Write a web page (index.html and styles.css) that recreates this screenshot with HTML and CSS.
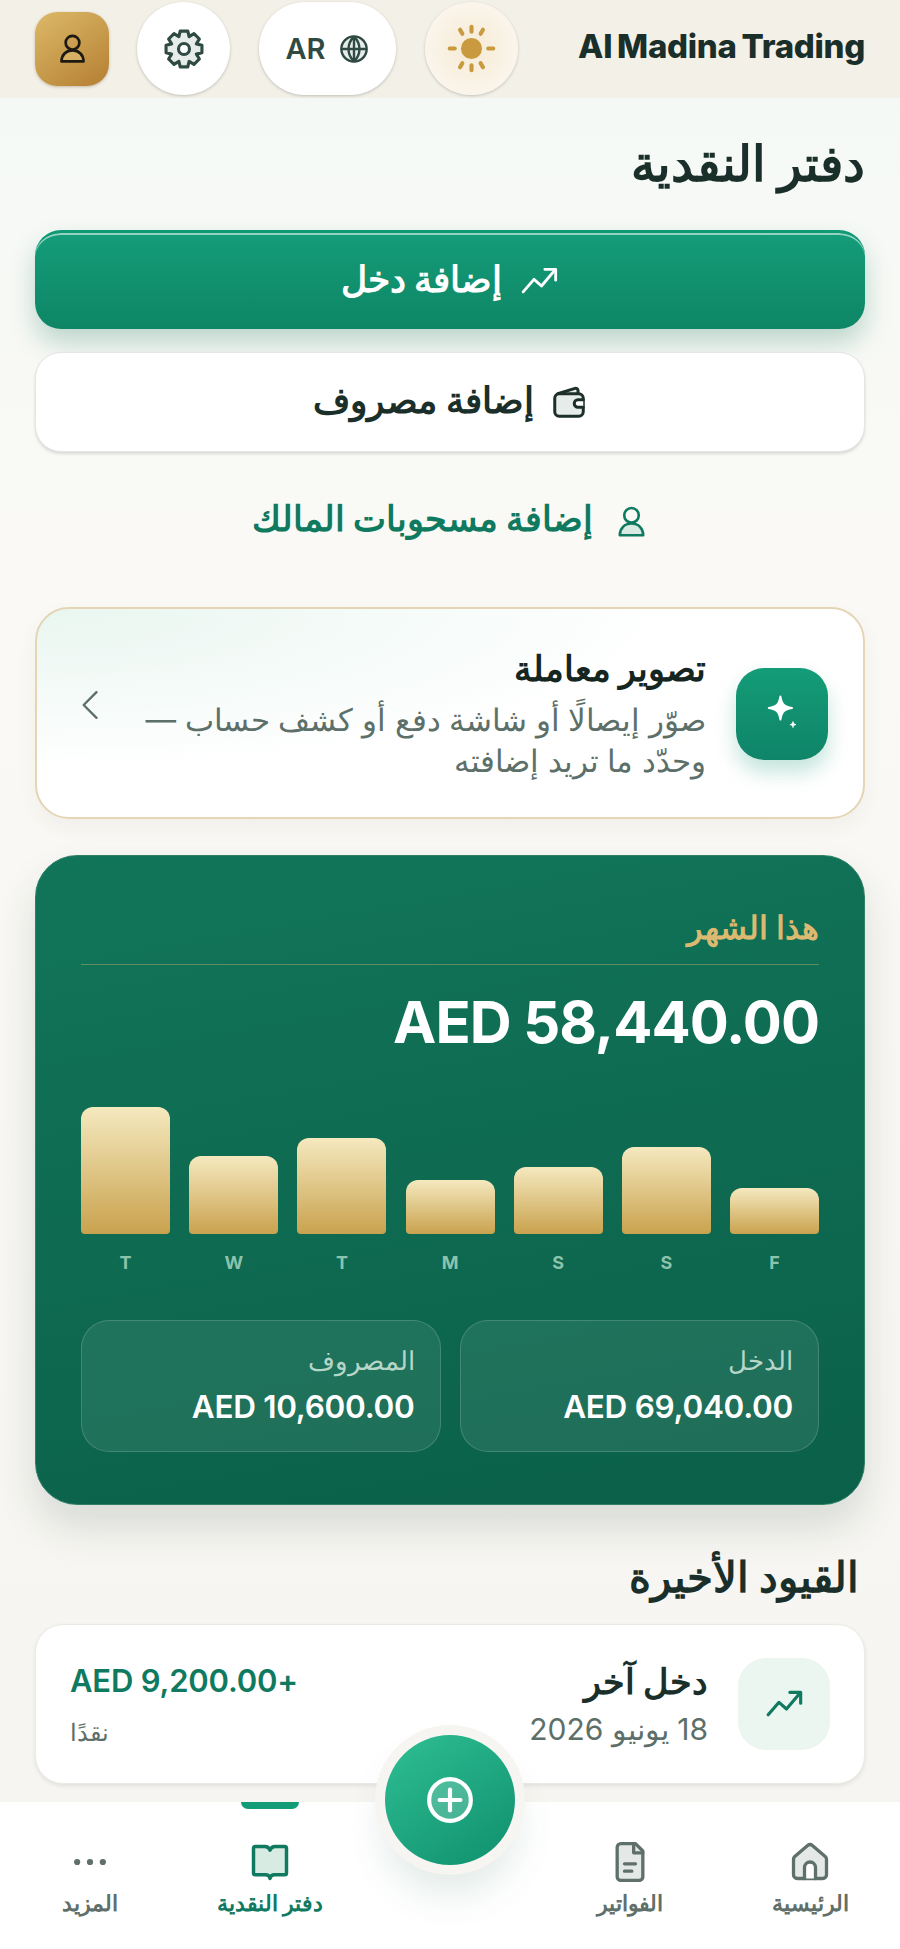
FILE: index.html
```html
<!DOCTYPE html>
<html lang="ar" dir="rtl">
<head>
<meta charset="utf-8">
<title>دفتر النقدية</title>
<link rel="stylesheet" href="styles.css">
</head>
<body>
<div class="app">
  <header class="topbar">
    <div class="brand">Al Madina Trading</div>
    <div class="top-actions">
      <button class="round sun" aria-label="theme">
        <svg width="55" height="55" viewBox="0 0 24 24" fill="none" stroke="#c99a3f" stroke-width="1.800" stroke-linecap="round"><circle cx="12" cy="12" r="4.600" fill="#c99a3f" stroke="none"/><path d="M12 2.500v2.200M12 19.300v2.200M2.500 12h2.200M19.300 12h2.200M7 3.800l1 1.800M16 18.400l1 1.800M7 20.200l1-1.800M16 5.600l1-1.800"/></svg>
      </button>
      <button class="round lang">
        <svg width="32" height="32" viewBox="0 0 24 24" fill="#e6ecea" stroke="#2f4a43" stroke-width="1.800"><circle cx="12" cy="12" r="9.500"/><path d="M2.500 12h19M12 2.500v19M12 2.500c-5.500 5.800-5.500 13.200 0 19M12 2.500c5.500 5.800 5.500 13.200 0 19"/></svg>
        <span class="lang-text">AR</span>
      </button>
      <button class="round gear" aria-label="settings">
        <svg width="44" height="44" viewBox="0 0 24 24" fill="#e6ecea" stroke="#2f4a43" stroke-width="1.700" stroke-linejoin="round"><polygon points="18.74,14.79 20.39,17.45 17.45,20.39 14.79,18.74 14.08,21.78 9.92,21.78 9.21,18.74 6.55,20.39 3.61,17.45 5.26,14.79 2.22,14.08 2.22,9.92 5.26,9.21 3.61,6.55 6.55,3.61 9.21,5.26 9.92,2.22 14.08,2.22 14.79,5.26 17.45,3.61 20.39,6.55 18.74,9.21 21.78,9.92 21.78,14.08"/><circle cx="12" cy="12" r="3" fill="#fff"/></svg>
      </button>
      <button class="avatar" aria-label="profile">
        <svg width="31" height="31" viewBox="0 0 24 24" fill="none" stroke="#1c1a12" stroke-width="2.100" stroke-linecap="round" stroke-linejoin="round"><circle cx="12" cy="7.500" r="5.300"/><path d="M3.500 22c0-5 3.400-8.500 8.500-8.500s8.500 3.500 8.500 8.500z" fill="#d8b063"/></svg>
      </button>
    </div>
  </header>

  <main class="content">
    <h1 class="page-title">دفتر النقدية</h1>

    <button class="btn btn-primary">
      <svg width="40" height="40" viewBox="0 0 24 24" fill="none" stroke="#fff" stroke-width="1.700" stroke-linecap="round" stroke-linejoin="round"><path d="M2.500 18.500L9 11l4.500 4 8-9.500"/><path d="M15.500 5H22v6.500"/></svg>
      <span>إضافة دخل</span>
    </button>

    <button class="btn btn-white">
      <svg width="36" height="36" viewBox="0 0 24 24" fill="#e6ecea" stroke="#1c2f2a" stroke-width="2" stroke-linecap="round" stroke-linejoin="round"><path d="M18 6.500V4.300a1.500 1.500 0 0 0-2-1.400L4.500 6.500"/><rect x="2.500" y="6.500" width="19" height="15" rx="3"/><path d="M21.500 10.500H18a2.500 2.500 0 0 0 0 5h3.500" fill="#fff"/></svg>
      <span>إضافة مصروف</span>
    </button>

    <button class="btn btn-link">
      <svg width="33" height="33" viewBox="0 0 24 24" fill="none" stroke="#0f7a5f" stroke-width="1.900" stroke-linecap="round" stroke-linejoin="round"><circle cx="12" cy="7.500" r="5.300"/><path d="M3.500 22c0-5 3.400-8.500 8.500-8.500s8.500 3.500 8.500 8.500z" fill="#d7ebe3"/></svg>
      <span>إضافة مسحوبات المالك</span>
    </button>

    <section class="snap">
      <div class="snap-icon">
        <svg width="48" height="48" viewBox="0 0 24 24" fill="#fff" stroke="#fff" stroke-width="1" stroke-linejoin="round"><path d="M11.200 3.200c.6 3.900 1.900 5.200 5.800 5.800-3.900.6-5.200 1.900-5.800 5.800-.6-3.900-1.900-5.200-5.800-5.800 3.900-.6 5.200-1.900 5.800-5.800z"/><path d="M17.500 15.800c.2 1 .5 1.300 1.500 1.500-1 .2-1.300.5-1.500 1.500-.2-1-.5-1.300-1.500-1.500 1-.2 1.300-.5 1.500-1.500z" stroke-width=".4"/></svg>
      </div>
      <div class="snap-text">
        <h2 class="snap-title">تصوير معاملة</h2>
        <p class="snap-desc">صوّر إيصالًا أو شاشة دفع أو كشف حساب — وحدّد ما تريد إضافته</p>
      </div>
      <svg class="snap-chev" width="44" height="44" viewBox="0 0 24 24" fill="none" stroke="#5d6f69" stroke-width="1.300" stroke-linecap="round" stroke-linejoin="round"><path d="M15 5l-7 7 7 7"/></svg>
    </section>

    <section class="month">
      <div class="month-label">هذا الشهر</div>
      <div class="month-total">AED 58,440.00</div>
      <div class="chart">
        <div class="col"><div class="bar b1"></div><span class="day">F</span></div>
        <div class="col"><div class="bar b2"></div><span class="day">S</span></div>
        <div class="col"><div class="bar b3"></div><span class="day">S</span></div>
        <div class="col"><div class="bar b4"></div><span class="day">M</span></div>
        <div class="col"><div class="bar b5"></div><span class="day">T</span></div>
        <div class="col"><div class="bar b6"></div><span class="day">W</span></div>
        <div class="col"><div class="bar b7"></div><span class="day">T</span></div>
      </div>
      <div class="stats">
        <div class="stat"><div class="stat-label">الدخل</div><div class="stat-value">AED 69,040.00</div></div>
        <div class="stat"><div class="stat-label">المصروف</div><div class="stat-value">AED 10,600.00</div></div>
      </div>
    </section>

    <h2 class="section-title">القيود الأخيرة</h2>

    <article class="entry">
      <div class="entry-icon">
        <svg width="40" height="40" viewBox="0 0 24 24" fill="none" stroke="#0f7a5f" stroke-width="1.900" stroke-linecap="round" stroke-linejoin="round"><path d="M2.500 18.500L9 11l4.500 4 8-9.500"/><path d="M15.500 5H22v6.500"/></svg>
      </div>
      <div class="entry-main">
        <div class="entry-title">دخل آخر</div>
        <div class="entry-date">18 يونيو 2026</div>
      </div>
      <div class="entry-side">
        <div class="entry-amount"><bdi dir="ltr">AED 9,200.00+</bdi></div>
        <div class="entry-method">نقدًا</div>
      </div>
    </article>
  </main>

  <nav class="tabbar">
    <a class="tab">
      <svg width="44" height="44" viewBox="0 0 24 24" fill="#e4e9e7" stroke="#5f6f6a" stroke-width="1.800" stroke-linecap="round" stroke-linejoin="round"><path d="M3 10.500a2 2 0 0 1 .7-1.500l7-6a2 2 0 0 1 2.600 0l7 6a2 2 0 0 1 .7 1.500V19a2 2 0 0 1-2 2H5a2 2 0 0 1-2-2z"/><path d="M15 21v-6a3 3 0 0 0-6 0v6" fill="#fff"/></svg>
      <span>الرئيسية</span>
    </a>
    <a class="tab">
      <svg width="44" height="44" viewBox="0 0 24 24" fill="#e4e9e7" stroke="#5f6f6a" stroke-width="1.800" stroke-linecap="round" stroke-linejoin="round"><path d="M15 2H7a2 2 0 0 0-2 2v16a2 2 0 0 0 2 2h10a2 2 0 0 0 2-2V6z"/><path d="M14 2v5h5" fill="none"/><path d="M9 13h6M9 17h4" fill="none"/></svg>
      <span>الفواتير</span>
    </a>
    <div class="tab-gap"></div>
    <a class="tab active">
      <span class="tab-ind"></span>
      <svg width="44" height="44" viewBox="0 0 24 24" fill="#d7ebe3" stroke="#0f7a5f" stroke-width="1.900" stroke-linecap="round" stroke-linejoin="round"><path d="M12 5.500V20"/><path d="M4 3.500h5a3 3 0 0 1 3 2 3 3 0 0 1 3-2h5a1 1 0 0 1 1 1V18a1 1 0 0 1-1 1h-5.500a2.500 2.500 0 0 0-2.500 2 2.500 2.500 0 0 0-2.500-2H4a1 1 0 0 1-1-1V4.500a1 1 0 0 1 1-1z"/></svg>
      <span>دفتر النقدية</span>
    </a>
    <a class="tab">
      <svg width="44" height="44" viewBox="0 0 24 24" fill="#5f6f6a"><circle cx="5" cy="12" r="1.700"/><circle cx="12" cy="12" r="1.700"/><circle cx="19" cy="12" r="1.700"/></svg>
      <span>المزيد</span>
    </a>
    <button class="fab" aria-label="add">
      <svg width="50" height="50" viewBox="0 0 24 24" fill="rgba(255,255,255,.2)" stroke="#fff" stroke-width="2" stroke-linecap="round"><circle cx="12" cy="12" r="10"/><path d="M12 7v10M7 12h10"/></svg>
    </button>
  </nav>
</div>
</body>
</html>
```

FILE: styles.css
```css
* { box-sizing: border-box; }
html, body { margin: 0; padding: 0; }
body {
  width: 900px;
  height: 1949px;
  overflow: hidden;
  font-family: Inter, sans-serif;
  background: #f8f7f3;
  color: #1b2f2a;
}
button { font: inherit; border: 0; background: none; padding: 0; }
.app { position: relative; height: 1949px; overflow: hidden; background: linear-gradient(180deg, #f5f9f6 98px, #faf9f5 560px, #f6f5f1 1800px); }

.topbar {
  height: 98px;
  background: #f3f0e8;
  padding: 2px 35px 0;
  display: flex;
  align-items: flex-start;
  justify-content: space-between;
}
.brand {
  font-size: 33px;
  font-weight: 800;
  letter-spacing: -0.3px;
  word-spacing: -2px;
  color: #1b2f2a;
  line-height: 88px;
  direction: ltr;
}
.top-actions { display: flex; align-items: center; gap: 29px; }
.round {
  height: 93px;
  width: 93px;
  border-radius: 50%;
  background: #fff;
  box-shadow: 0 1px 3px rgba(40,50,45,.25);
  display: flex;
  align-items: center;
  justify-content: center;
}
.sun { background: radial-gradient(circle, #f7eddb 20%, #fbf6ee 80%); }
.lang { width: 137px; border-radius: 46px; gap: 12px; color: #2f4a43; }
.lang-text { font-size: 29px; font-weight: 600; direction: ltr; }
.avatar {
  width: 74px;
  height: 74px;
  margin-right: -1px;
  border-radius: 22px;
  background: linear-gradient(145deg, #dcb968, #b57f33);
  display: flex;
  align-items: center;
  justify-content: center;
  box-shadow: 0 1px 3px rgba(90,60,20,.3);
}

.content { padding: 0 35px; }
.page-title {
  margin: 0;
  padding-top: 35px;
  font-size: 49px;
  line-height: 61px;
  font-weight: 700;
  color: #1b2f2a;
}
.btn {
  width: 100%;
  display: flex;
  align-items: center;
  justify-content: center;
  gap: 17px;
  font-size: 36px;
  font-weight: 700;
}
.btn span { margin-top: -5px; }
.btn-primary {
  margin-top: 36px;
  height: 99px;
  border-radius: 26px;
  color: #fff;
  background: linear-gradient(180deg, #149c78, #0e8666);
  border-top: 3px solid #0f9a76;
  box-shadow: inset 0 2px 0 rgba(255,255,255,.55), 0 14px 26px rgba(15,110,85,.25);
}
.btn-white {
  margin-top: 23px;
  height: 100px;
  border-radius: 26px;
  background: #fff;
  color: #1b2f2a;
  border: 1px solid #e5e6e3;
  box-shadow: 0 2px 3px rgba(40,50,45,.15);
}
.btn-link {
  margin-top: 20px;
  height: 98px;
  gap: 22px;
  font-size: 34.5px;
  color: #0f7a5f;
}

.snap {
  margin-top: 37px;
  height: 212px;
  border-radius: 34px;
  border: 2px solid #e4d5b4;
  background: radial-gradient(ellipse at 0 0, #e9f6f0, #fff 55%);
  box-shadow: 0 8px 20px rgba(50,50,40,.05);
  display: flex;
  align-items: center;
  padding: 0 35px 0 32px;
  gap: 30px;
}
.snap-icon {
  flex: none;
  width: 92px;
  height: 92px;
  margin-top: 2px;
  border-radius: 28px;
  background: linear-gradient(180deg, #149c78, #0f8468);
  display: flex;
  align-items: center;
  justify-content: center;
  box-shadow: 0 12px 20px rgba(15,150,115,.25);
}
.snap-text { flex: 1; }
.snap-title { margin: 0 0 9px; font-size: 35px; line-height: 44px; font-weight: 700; color: #14261f; }
.snap-desc { margin: 0; font-size: 30.6px; line-height: 41px; color: #5d6f69; }
.snap-chev { flex: none; margin-bottom: 16px; }

.month {
  margin-top: 36px;
  height: 650px;
  border-radius: 42px;
  background: linear-gradient(170deg, #117559, #0b6049);
  border: 1px solid #2f8067;
  padding: 50px 45px 0;
  box-shadow: 0 22px 40px rgba(30,60,50,.14);
  color: #fff;
}
.month-label {
  font-size: 32px;
  line-height: 44px;
  font-weight: 700;
  color: #dcb970;
  padding-bottom: 14px;
  border-bottom: 1px solid rgba(220,185,112,.4);
}
.month-total {
  margin-top: 21px;
  font-size: 58px;
  line-height: 72px;
  font-weight: 700;
  letter-spacing: -1px;
  direction: ltr;
  text-align: right;
}
.chart {
  margin-top: 48px;
  display: flex;
  justify-content: space-between;
  height: 170px;
}
.col { width: 89px; display: flex; flex-direction: column; align-items: center; justify-content: flex-end; }
.bar { width: 89px; border-radius: 12px 12px 4px 4px; background: linear-gradient(180deg, #f5e9bf, #c9a24e); }
.b1 { height: 46px; }
.b2 { height: 87px; }
.b3 { height: 67px; }
.b4 { height: 54px; }
.b5 { height: 96px; }
.b6 { height: 78px; }
.b7 { height: 127px; }
.day { margin-top: 16px; font-size: 18px; line-height: 26px; font-weight: 700; color: #8cc3ad; }
.stats { margin-top: 44px; display: grid; grid-template-columns: 1fr 1fr; gap: 19px; }
.stat {
  height: 132px;
  border-radius: 28px;
  background: rgba(255,255,255,.08);
  border: 1px solid rgba(255,255,255,.16);
  padding: 20px 25px;
}
.stat-label { font-size: 26px; line-height: 40px; color: #b5d6c9; }
.stat-value { margin-top: 4px; font-size: 31.5px; line-height: 44px; font-weight: 600; letter-spacing: -0.3px; direction: ltr; text-align: right; }

.section-title { margin: 44px 6px 0 0; font-size: 41.5px; line-height: 56px; font-weight: 700; color: #1b2f2a; }
.entry {
  margin-top: 19px;
  height: 160px;
  border-radius: 28px;
  background: #fff;
  border: 1px solid #eceae5;
  box-shadow: 0 2px 4px rgba(40,50,45,.1);
  display: flex;
  align-items: center;
  padding: 0 34px;
  gap: 30px;
}
.entry-icon { flex: none; width: 92px; height: 92px; border-radius: 28px; background: #ecf6f0; display: flex; align-items: center; justify-content: center; }
.entry-main { flex: 1; }
.entry-title { font-size: 35px; line-height: 48px; font-weight: 700; color: #1b2f2a; }
.entry-date { margin-top: 2px; font-size: 30px; line-height: 44px; color: #5d6f69; }
.entry-side { text-align: left; }
.entry-amount { padding-top: 3px; font-size: 31px; line-height: 48px; font-weight: 600; letter-spacing: -0.2px; color: #0f7a5f; }
.entry-method { margin-top: 6px; font-size: 24px; line-height: 44px; color: #5d6f69; }

.tabbar {
  position: absolute;
  left: 0;
  right: 0;
  bottom: 0;
  height: 147px;
  background: #fff;
  display: grid;
  grid-template-columns: repeat(5, 1fr);
  align-items: start;
  padding-top: 38px;
}
.tab {
  position: relative;
  display: flex;
  flex-direction: column;
  align-items: center;
  gap: 6px;
  font-size: 22px;
  font-weight: 700;
  color: #5f6f6a;
}
.tab.active { color: #0f7a5f; }
.tab-ind { position: absolute; top: -38px; width: 58px; height: 7px; background: #129d78; border-radius: 0 0 8px 8px; }
.fab {
  position: absolute;
  left: 385px;
  top: -67px;
  width: 130px;
  height: 130px;
  border-radius: 50%;
  background: linear-gradient(145deg, #2fbf93, #0f8f6d);
  display: flex;
  align-items: center;
  justify-content: center;
  box-shadow: 0 0 0 10px #f6f5f1, 0 26px 40px rgba(20,90,70,.14);
}
```
